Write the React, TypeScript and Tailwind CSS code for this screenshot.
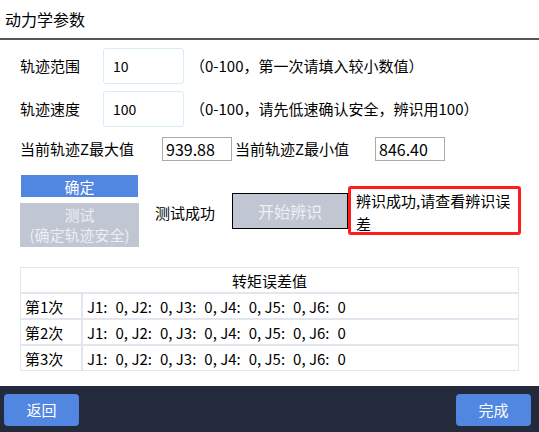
import React from 'react';

const font = { fontFamily: '"Noto Sans CJK SC", "Noto Sans", sans-serif' };

const rows = ['第1次', '第2次', '第3次'];
const joints = ['J1', 'J2', 'J3', 'J4', 'J5', 'J6'];

function JointValues() {
  return (
    <span>
      {joints.map((j, i) => (
        <span key={j}>
          {j}:<span className="ml-[8px]">0</span>
          {i < joints.length - 1 ? ', ' : ''}
        </span>
      ))}
    </span>
  );
}

export default function App() {
  return (
    <div className="w-[539px] h-[432px] bg-white flex flex-col text-[15px] text-black overflow-hidden" style={font}>
      {/* header */}
      <div className="h-[38px] flex items-center pl-[5px] text-[16px]">动力学参数</div>
      <div className="h-[2px] bg-[#555555]" />

      <div className="flex-1 flex flex-col pl-[20px]">
        <div className="flex items-center mt-[8px] h-[36px]">
          <span className="w-[83px]">轨迹范围</span>
          <div className="w-[81px] h-[36px] border border-[#d6edf8] rounded-[3px] flex items-center pl-[9px] text-[14px]">10</div>
          <span className="ml-[6px]">（0-100，第一次请填入较小数值）</span>
        </div>
        <div className="flex items-center mt-[7px] h-[36px]">
          <span className="w-[83px]">轨迹速度</span>
          <div className="w-[81px] h-[36px] border border-[#d6edf8] rounded-[3px] flex items-center pl-[9px] text-[14px]">100</div>
          <span className="ml-[6px]">（0-100，请先低速确认安全，辨识用100）</span>
        </div>

        <div className="flex items-center mt-[10px] h-[24px]">
          <span className="w-[142px]">当前轨迹Z最大值</span>
          <div className="w-[70px] h-[24px] border border-[#aaaaaa] flex items-center pl-[3px] text-[16px]">939.88</div>
          <span className="ml-[3px] w-[140px]">当前轨迹Z最小值</span>
          <div className="w-[70px] h-[24px] border border-[#aaaaaa] flex items-center pl-[3px] text-[16px]">846.40</div>
        </div>

        <div className="flex mt-[14px]">
          <div className="flex flex-col w-[119px]">
            <div className="h-[22px] ml-[1px] w-[117px] bg-[#5187e0] text-white flex items-center justify-center leading-none">确定</div>
            <div className="h-[44px] mt-[6px] bg-[#c1c6d3] text-[#eceef3] flex flex-col items-center justify-center leading-[20px]">
              <span>测试</span>
              <span>(确定轨迹安全)</span>
            </div>
          </div>
          <div className="flex items-start">
            <span className="ml-[16px] mt-[27px] w-[77px]">测试成功</span>
            <div className="mt-[18px] w-[116px] h-[36px] bg-[#c1c6d3] border border-black text-[#eef0f4] text-[16px] flex items-center justify-center">开始辨识</div>
            <div className="mt-[11px] w-[173px] h-[49px] border-[3px] border-[#ff1c1c] rounded-[3px] pl-[5px] leading-[23px]">
              辨识成功,请查看辨识误差
            </div>
          </div>
        </div>

        <table className="mt-[20px] w-[499px] border-separate border-spacing-0 text-[15px]">
          <tbody>
            <tr>
              <td colSpan={2} className="h-[26px] border border-[#e2e6ee] text-center leading-none">转矩误差值</td>
            </tr>
            {rows.map((r) => (
              <tr key={r}>
                <td className="w-[62px] h-[26px] border border-[#e2e6ee] pl-[4px] leading-none">{r}</td>
                <td className="h-[26px] border border-[#e2e6ee] pl-[4px] leading-none whitespace-pre">
                  <JointValues />
                </td>
              </tr>
            ))}
          </tbody>
        </table>
      </div>

      {/* footer */}
      <div className="h-[46px] bg-[#232a3b] flex items-center justify-between px-[4px] pt-[2px]">
        <button className="w-[75px] h-[32px] bg-[#5187e0] rounded-[4px] text-white text-[15px]">返回</button>
        <button className="w-[75px] h-[32px] mr-[4px] bg-[#5187e0] rounded-[4px] text-white text-[15px]">完成</button>
      </div>
    </div>
  );
}
